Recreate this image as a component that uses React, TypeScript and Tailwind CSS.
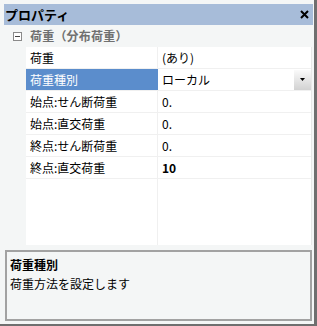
import React from "react";

const rows = [
  { label: "荷重", value: "(あり)" },
  { label: "荷重種別", value: "ローカル", selected: true },
  { label: "始点:せん断荷重", value: "0." },
  { label: "始点:直交荷重", value: "0." },
  { label: "終点:せん断荷重", value: "0." },
  { label: "終点:直交荷重", value: "10", bold: true },
];

const font = { fontFamily: '"Noto Sans CJK JP", "Noto Sans", sans-serif' };

export default function App() {
  return (
    <div
      className="w-[317px] h-[326px] bg-[#f4f6f6] border-r-[3px] border-b-[2px] border-[#6f6f6f] pl-[4px] pt-[4px] pr-px flex flex-col text-[12px] text-black leading-none"
      style={font}
    >
      {/* title bar */}
      <div className="h-[21px] bg-[#a7bcd9] flex items-center justify-between pl-[1px] pr-[4px]">
        <span className="font-bold text-[13px]">プロパティ</span>
        <svg width="9" height="9" viewBox="0 0 9 9">
          <path d="M1 1L8 8M8 1L1 8" stroke="#000" strokeWidth="2" />
        </svg>
      </div>

      {/* grid */}
      <div className="flex-1 flex flex-col">
        <div className="h-[22px] flex items-center">
          <div className="w-[22px] flex items-center justify-center pl-[4px]">
            <div className="w-[9px] h-[9px] border border-[#8a8a8a] bg-white flex items-center justify-center">
              <div className="w-[5px] h-px bg-[#444]" />
            </div>
          </div>
          <span className="pl-[4px] font-bold text-[#707070] tracking-[0.2px]">荷重（分布荷重）</span>
        </div>
        <div className="flex-1 flex mb-[5px] pr-px">
          <div className="w-[22px]" />
          <div className="flex-1 flex flex-col bg-white border-r border-[#e8e8e8]">
            {rows.map((r) => (
              <div key={r.label} className="h-[22px] flex border-b border-[#f0f0f0]">
                <div
                  className={
                    r.selected
                      ? "w-[131px] flex items-center pl-[4px] bg-[#5b8dcc] text-white"
                      : "w-[131px] flex items-center pl-[4px]"
                  }
                >
                  {r.label}
                </div>
                <div
                  className={
                    r.selected
                      ? "flex-1 flex items-center justify-between pl-[4px] border-l border-[#5b8dcc]"
                      : "flex-1 flex items-center pl-[4px] border-l border-[#f0f0f0]"
                  }
                >
                  <span className={r.bold ? "font-bold" : ""}>{r.value}</span>
                  {r.selected && (
                    <div className="w-[17px] h-[20px] bg-gradient-to-b from-[#fafafa] to-[#d2d2d2] flex items-center justify-center">
                      <svg width="5" height="3" viewBox="0 0 5 3">
                        <path d="M0 0H5L2.5 3Z" fill="#000" />
                      </svg>
                    </div>
                  )}
                </div>
              </div>
            ))}
            <div className="flex-1 flex">
              <div className="w-[131px]" />
              <div className="flex-1 border-l border-[#f0f0f0]" />
            </div>
          </div>
        </div>
      </div>

      {/* description */}
      <div className="h-[71px] mr-[1px] mb-[3px] ml-[1px] border-2 border-[#a2a2a2] bg-[#f4f6f6] pl-[3px] pt-[7px] flex flex-col gap-[7px]">
        <span className="font-bold">荷重種別</span>
        <span>荷重方法を設定します</span>
      </div>
    </div>
  );
}
